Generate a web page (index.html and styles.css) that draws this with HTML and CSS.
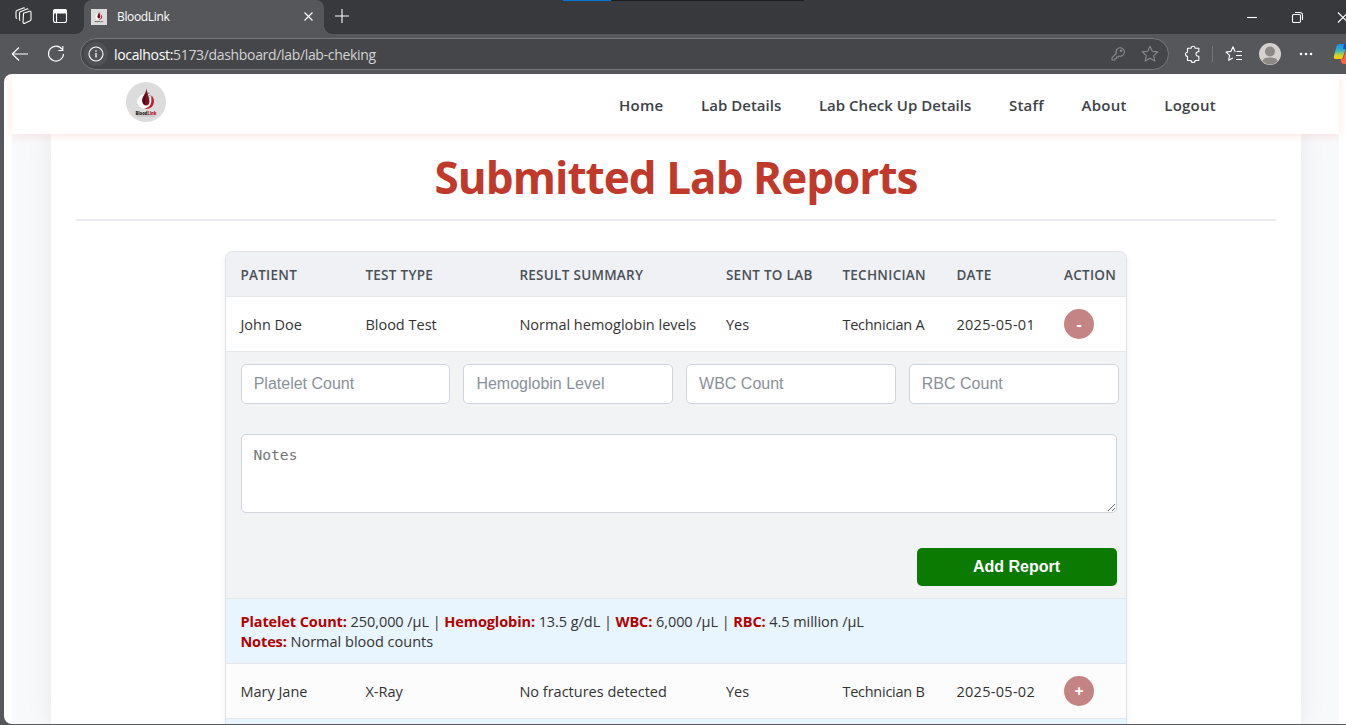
FILE: index.html
```html
<!DOCTYPE html>
<html lang="en">
<head>
<meta charset="utf-8">
<title>BloodLink</title>
<link rel="stylesheet" href="styles.css">
</head>
<body>
<svg class="defs" width="0" height="0">
  <symbol id="logo" viewBox="0 0 40 40">
    <rect width="40" height="40" fill="#dcdcdc"/>
    <circle cx="18.500" cy="19.500" r="7.200" fill="#fff"/>
    <path d="M20.500 6c.300 5-4.500 8-4.500 12.500 0 3 2 5 4.200 5s3.300-2 3.300-4.500C23.500 15 20.800 11 20.500 6z" fill="#7d1220"/>
    <path d="M20 9c0 4-3 7-3 10 0 2 1 3 2 3z" fill="#4c0a14"/>
    <path d="M25.500 13.500c4 4 3.200 10.500-2 12.800-2 .900-4 .700-5.200.200 4-.800 6.500-3 7-6.500.200-2-.300-4 .200-6.500z" fill="#c21d2c"/>
    <path d="M22 10.500h1.500V12H22zM23.500 13h1.200v1.200h-1.200zM22.500 15.500h1.500v1h-1.500z" fill="#7d93a8"/>
    <text x="9.500" y="32.500" class="logo-word" textLength="21" lengthAdjust="spacingAndGlyphs">Blood<tspan fill="#b01c2e">Link</tspan></text>
    <path d="M11 34h18" stroke="#999" stroke-width=".5"/>
  </symbol>
</svg>

<header class="tabbar">
  <div class="loading"><i></i></div>
  <div class="tab-tools">
    <svg width="18" height="18" viewBox="0 0 18 18" class="ico"><path d="M8.500 6.200l6-2a1.200 1.200 0 0 1 1.500 1.100v7.200c0 .600-.300 1-.900 1.200l-5.300 2.500c-.900.400-1.800-.100-1.800-1zM5.200 13.500c-.500-.200-.700-.600-.700-1.100V6c0-.600.300-1 .900-1.300L12 1.900c.500-.200 1 .100 1.200.500M2 11.500c-.700-.200-1-.700-1-1.300V4.600c0-.600.300-1 .900-1.200L8.300.900c.600-.200 1.100 0 1.400.500"/></svg>
    <svg width="16" height="16" viewBox="0 0 16 16" class="ico"><rect x="1.500" y="1.500" width="13" height="13" rx="2"/><path d="M1.500 3.500a2 2 0 0 1 2-2h9a2 2 0 0 1 2 2V5h-13z" fill="#fff"/><path d="M4.500 5v9"/></svg>
  </div>
  <div class="tab">
    <svg width="16" height="16"><use href="#logo"/></svg>
    <span class="tab-title">BloodLink</span>
    <svg width="9" height="9" viewBox="0 0 9 9" class="ico"><path d="M.5.500l8 8M8.500.500l-8 8"/></svg>
  </div>
  <svg width="14" height="14" viewBox="0 0 14 14" class="ico plus"><path d="M7 0v14M0 7h14"/></svg>
  <div class="window-tools">
    <svg width="10" height="11" viewBox="0 0 10 11" class="ico"><path d="M0 5.500h10"/></svg>
    <svg width="11" height="11" viewBox="0 0 11 11" class="ico"><rect x=".5" y="2.500" width="8" height="8" rx="1.200"/><path d="M3 .5h5a2.500 2.500 0 0 1 2.500 2.500v5"/></svg>
    <svg width="10" height="11" viewBox="0 0 10 11" class="ico"><path d="M0 .5l10 10M10 .5l-10 10"/></svg>
  </div>
</header>

<div class="toolbar">
  <svg width="17" height="16" viewBox="0 0 17 16" class="ico"><path d="M16 8H0M7 1.500L.3 8 7 14.500"/></svg>
  <svg width="18" height="18" viewBox="0 0 18 18" class="ico reload"><path d="M15.300 4.500A7.500 7.500 0 1 0 16.500 9M15.800 1v4.500h-4.500"/></svg>
  <div class="address">
    <span class="info"><svg width="16" height="16" viewBox="0 0 16 16" class="ico"><circle cx="8" cy="8" r="7"/><path d="M8 7v4.500M8 4.300v1.400" stroke-width="1.300"/></svg></span>
    <span class="url"><b>localhost:</b>5173/dashboard/lab/lab-cheking</span>
    <svg width="16" height="16" viewBox="0 0 16 16" class="ico dim"><path d="M6.300 7.500a4.200 4.200 0 1 1 2.700 2.500L8 11H6.500v1.500H5V14H2v-2.400z"/><circle cx="11" cy="4.800" r=".7"/></svg>
    <svg width="18" height="18" viewBox="0 0 18 18" class="ico dim star"><path d="M9 1.300l2.300 5 5.400.600-4 3.700 1.100 5.400L9 13.300 4.200 16l1.100-5.400-4-3.700 5.400-.600z"/></svg>
  </div>
  <svg width="18" height="18" viewBox="0 0 18 18" class="ico puzzle"><path d="M3.500 3.300h3.600a2 2 0 0 1 4 0h3.700v3.500h-.600a2.200 2.200 0 0 0 0 4.400h.6v4.300h-3.700a2 2 0 0 1-4 0H3.500v-4.300a2 2 0 0 1 0-4z"/></svg>
  <i class="divider"></i>
  <svg width="18" height="18" viewBox="0 0 18 18" class="ico fav"><path d="M10.500 6.500H10L8 1.800 5.900 6.400l-4.900.6 3.600 3.400-1 4.900 4.200-2.300M11.500 6.500H17M11 10.500h6M11 14.500h6"/></svg>
  <svg width="22" height="22" viewBox="0 0 22 22" class="avatar"><circle cx="11" cy="11" r="11" fill="#d4d1ce"/><circle cx="11" cy="8.500" r="5" fill="#8d8987"/><path d="M3.500 18.500c0-3 3-4 7.500-4s7.500 1 7.500 4a11 11 0 0 1-15 0z" fill="#8d8987"/></svg>
  <svg width="14" height="4" viewBox="0 0 14 4" class="dots"><circle cx="2" cy="2" r="1.300"/><circle cx="7" cy="2" r="1.300"/><circle cx="12" cy="2" r="1.300"/></svg>
  <svg width="22" height="22" viewBox="0 0 22 22" class="copilot">
    <defs><linearGradient id="cp" x1="0" y1="0" x2="0" y2="1"><stop offset="0" stop-color="#1b8ee8"/><stop offset=".45" stop-color="#35b6c4"/><stop offset=".75" stop-color="#c9d52c"/><stop offset="1" stop-color="#ffc800"/></linearGradient></defs>
    <path d="M6 1h8l-4 13c-.500 1.500-1 2-2.500 2H3c-2 0-2.500-1-2-3L3.500 3.500C4 2 4.500 1 6 1z" fill="url(#cp)"/>
    <path d="M11 1h4l-1.500 5H10z" fill="#1a4fc0"/>
    <path d="M12.500 8l3-1.500h6V21H11c-1.800 0-2.800-.800-3.500-4.500 2 0 2.800-1 3.300-2.500z" fill="#ff6048"/>
  </svg>
</div>

<div class="viewport">
  <div class="page">
    <nav class="navbar">
      <svg class="brand" width="40" height="40"><use href="#logo"/></svg>
      <ul class="links">
        <li>Home</li><li class="tight">Lab Details</li><li class="tight">Lab Check Up Details</li><li>Staff</li><li>About</li><li>Logout</li>
      </ul>
    </nav>
    <main class="container">
      <h1><span>Submitted Lab Reports</span></h1>
      <section class="table">
        <div class="row head"><span>PATIENT</span><span>TEST TYPE</span><span>RESULT SUMMARY</span><span>SENT TO LAB</span><span>TECHNICIAN</span><span>DATE</span><span>ACTION</span></div>
        <div class="row"><span>John Doe</span><span>Blood Test</span><span>Normal hemoglobin levels</span><span>Yes</span><span class="tech">Technician A</span><span class="date">2025-05-01</span><span><button class="toggle">-</button></span></div>
        <div class="form">
          <div class="fields"><input placeholder="Platelet Count"><input placeholder="Hemoglobin Level"><input placeholder="WBC Count"><input placeholder="RBC Count"></div>
          <textarea placeholder="Notes"></textarea>
          <button class="add">Add Report</button>
        </div>
        <div class="details">
          <p class="counts"><b>Platelet Count:</b> 250,000 /µL | <b>Hemoglobin:</b> 13.5 g/dL | <b>WBC:</b> 6,000 /µL | <b>RBC:</b> 4.5 million /µL</p>
          <p class="notes"><b>Notes:</b> Normal blood counts</p>
        </div>
        <div class="row alt"><span>Mary Jane</span><span>X-Ray</span><span>No fractures detected</span><span>Yes</span><span class="tech">Technician B</span><span class="date">2025-05-02</span><span><button class="toggle">+</button></span></div>
        <div class="details"></div>
      </section>
    </main>
  </div>
</div>
</body>
</html>
```
FILE: styles.css
```css
* { box-sizing: border-box; }
body { margin: 0; width: 1346px; height: 725px; overflow: hidden; background: #56575b; font-family: "Open Sans", sans-serif; display: flex; flex-direction: column; }
svg { flex: none; display: block; }
.defs { display: none; }
.logo-word { font: 900 5.500px "Open Sans", sans-serif; fill: #222; }
.ico { fill: none; stroke: #fff; stroke-width: 1.100; stroke-linejoin: round; overflow: visible; }

.tabbar { position: relative; height: 34px; flex: none; display: flex; align-items: center; background: #38393c; }
.loading { position: absolute; top: 0; left: 563px; width: 241px; height: 1px; background: #1d1d1f; }
.loading i { display: block; width: 48px; height: 1px; background: #0078d4; }
.tab-tools { width: 84px; padding: 0 16px 2px 15px; display: flex; align-items: center; gap: 19px; }
.tab { position: relative; width: 240px; height: 34px; padding: 0 11px 1px 7px; display: flex; align-items: center; background: #56575b; border-radius: 8px 8px 0 0; }
.tab::before, .tab::after { content: ""; position: absolute; bottom: 0; width: 8px; height: 8px; }
.tab::before { left: -8px; background: radial-gradient(circle at 0 0, #38393c 7.500px, #56575b 8px); }
.tab::after { right: -8px; background: radial-gradient(circle at 100% 0, #38393c 7.500px, #56575b 8px); }
.tab-title { flex: 1; padding-left: 10px; color: #fff; font-size: 12px; letter-spacing: -.35px; }
.plus { margin: 0 0 2px 11px; }
.window-tools { margin: 0 -2px 0 auto; display: flex; gap: 35px; }

.toolbar { height: 40px; flex: none; display: flex; align-items: center; padding-left: 12px; }
.reload { margin-left: 18px; }
.address { flex: none; width: 1089px; height: 32px; margin-left: 15px; padding: 0 9px 0 3px; display: flex; align-items: center; background: #454649; border: 1px solid #77787b; border-radius: 16px; }
.info { width: 24px; height: 24px; border-radius: 50%; background: #505155; display: grid; place-items: center; }
.url { flex: 1; padding-left: 6px; font-size: 14px; letter-spacing: -.33px; color: #d3d3d4; }
.url b { font-weight: 400; color: #fff; }
.dim { stroke: #8a8b8e; }
.star { margin-left: 15px; }
.puzzle { margin-left: 15px; }
.divider { flex: none; width: 1px; height: 16px; margin: 0 12px 0 10px; background: #737477; }
.avatar { margin-left: 16px; }
.dots { margin-left: 18px; fill: #fff; }
.copilot { margin-left: 20px; }

.viewport { width: 1342px; height: 650px; margin-left: 4px; padding: 0 7px 0 8px; overflow: hidden; background: #fff; border-radius: 8px 0 0 8px; }
.page { height: 650px; background: #f8f9fb; }
.navbar { position: relative; height: 60px; padding: 0 123px 0 114px; display: flex; align-items: center; justify-content: space-between; background: #fff; box-shadow: 0 2px 10px rgba(255, 0, 0, .1); }
.brand { border-radius: 50%; margin-bottom: 4px; }
.links { list-style: none; margin: 0; padding: 2px 0 0; display: flex; gap: 37.600px; font-size: 15px; font-weight: 600; letter-spacing: .25px; color: #3d4247; white-space: nowrap; }
.links .tight { letter-spacing: .02px; }
.container { width: 1250px; height: 590px; margin-left: 39px; padding: 0 25px; background: #fff; box-shadow: 0 0 25px rgba(0, 0, 0, .08); }
h1 { height: 87px; margin: 0 0 30px; padding-top: 13px; border-bottom: 2px solid #e9ebee; text-align: center; font-size: 44px; line-height: 60px; letter-spacing: -.95px; font-weight: 700; color: #c0392b; }
.table { width: 902px; height: 500px; margin-left: 149px; background: #fff; border: 1px solid #dee2e6; border-radius: 8px; overflow: hidden; box-shadow: 0 2px 8px rgba(0, 0, 0, .05); }
.row { height: 55px; display: grid; grid-template-columns: 125px 154px 206.500px 116.500px 114px 108px 76px; align-items: center; border-bottom: 1px solid #e5e8eb; font-size: 14.500px; color: #333; white-space: nowrap; }
.row > span { padding-left: 14.400px; }
.row > .tech { letter-spacing: -.25px; }
.row > .date { letter-spacing: .3px; }
.row > span:last-child { padding-left: 14px; }
.head { height: 45px; padding-top: 2px; background: #f0f1f5; color: #495057; font-size: 13.500px; letter-spacing: .28px; font-weight: 600; }
.alt { background: #fcfcfc; }
.toggle { display: block; width: 30px; height: 30px; padding: 0; border: 0; border-radius: 50%; background: #c48483; color: #fff; font: 700 16px/30px "Open Sans", sans-serif; }
.form { height: 247px; padding: 12px 7px 12px 15px; background: #f2f3f5; border-bottom: 1px solid #e5e8eb; display: flex; flex-direction: column; }
.fields { display: grid; grid-template-columns: repeat(4, 209.800px); gap: 12.930px; margin-left: -.350px; }
.fields input { min-width: 0; height: 40px; padding: 0 12px; border: 1px solid #ced4da; border-radius: 5px; font: 16px "Liberation Sans", Arial, sans-serif; }
.fields input::placeholder { color: #8a9199; }
textarea { width: 876px; height: 79px; margin-top: 30px; padding: 11px 11.500px; border: 1px solid #ced4da; border-radius: 5px; background: #fff; font: 14.600px "DejaVu Sans Mono", monospace; resize: vertical; }
textarea::placeholder { color: #757575; }
.add { width: 200px; height: 38px; margin: 35px 2px 0 auto; padding: 0 1px 1px 0; border: 0; border-radius: 5px; background: #0b7a02; color: #fff; font: 700 16px "Liberation Sans", Arial, sans-serif; }
.details { height: 65px; padding: 13px 14.400px; background: #e8f4fe; border-bottom: 1px solid #e5e8eb; font-size: 14.500px; line-height: 20px; letter-spacing: -.06px; color: #333; white-space: nowrap; }
.details p { margin: 0; }
.details .notes { letter-spacing: 0; }
.details b { letter-spacing: -.1px; color: #b30000; }
```
